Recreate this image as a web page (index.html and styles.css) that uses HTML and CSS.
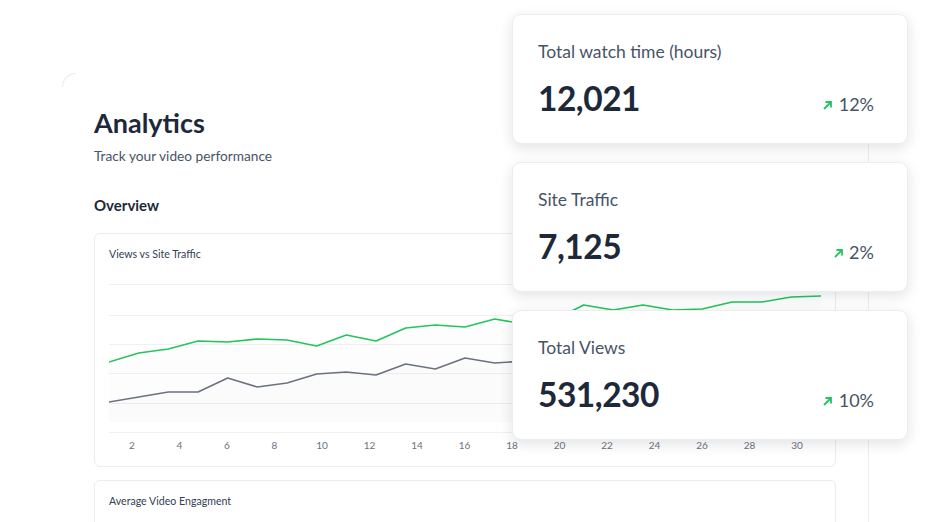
FILE: index.html
```html
<!DOCTYPE html>
<html lang="en">
  <head>
    <meta charset="UTF-8" />
    <meta name="viewport" content="width=device-width, initial-scale=1.0" />
    <title>Analytics</title>
    <link rel="stylesheet" href="styles.css">
  </head>
  <body>
    <div class="panel">
      <div class="panel-content">
        <h1>Analytics</h1>
        <p class="subtitle">Track your video performance</p>
        <h2 class="section-title">Overview</h2>

        <div class="chart-card">
          <h3 class="chart-title">Views vs Site Traffic</h3>
          <svg class="chart" width="712" height="180" viewBox="0 0 712 180">
            <!-- grid -->
            <g stroke="#f0f0f0" stroke-width="1">
              <line x1="0" y1="8.5" x2="712" y2="8.5" />
              <line x1="0" y1="39.5" x2="712" y2="39.5" />
              <line x1="0" y1="68.5" x2="712" y2="68.5" />
              <line x1="0" y1="97.5" x2="712" y2="97.5" />
              <line x1="0" y1="127.5" x2="712" y2="127.5" />
              <line x1="0" y1="156.5" x2="712" y2="156.5" />
            </g>
            <!-- area under the lines -->
            <polygon fill="#000" fill-opacity="0.009"
              points="0,86 29.7,77 59.3,73 89,65 118.7,66 148.3,63 178,64 207.7,70 237.3,59 267,65 296.7,52 326.3,49 356,51 385.7,43 415.3,48 445,44 474.7,29 504.3,34 534,29 563.7,34 593.3,33 623,26 652.7,26 682.3,21 712,20 712,146 0,146" />
            <polygon fill="#000" fill-opacity="0.007"
              points="0,126 29.7,121 59.3,116 89,116 118.7,102 148.3,111 178,107 207.7,98 237.3,96 267,99 296.7,88 326.3,93 356,82 385.7,87 415.3,85 445,81 474.7,77 504.3,79 534,74 563.7,75 593.3,70 623,71 652.7,67 682.3,65 712,63 712,146 0,146" />
            <!-- site traffic -->
            <polyline fill="none" stroke="#6b7280" stroke-width="1.6" stroke-linejoin="round"
              points="0,126 29.7,121 59.3,116 89,116 118.7,102 148.3,111 178,107 207.7,98 237.3,96 267,99 296.7,88 326.3,93 356,82 385.7,87 415.3,85 445,81 474.7,77 504.3,79 534,74 563.7,75 593.3,70 623,71 652.7,67 682.3,65 712,63" />
            <!-- views -->
            <polyline fill="none" stroke="#22c55e" stroke-width="1.6" stroke-linejoin="round"
              points="0,86 29.7,77 59.3,73 89,65 118.7,66 148.3,63 178,64 207.7,70 237.3,59 267,65 296.7,52 326.3,49 356,51 385.7,43 415.3,48 445,44 474.7,29 504.3,34 534,29 563.7,34 593.3,33 623,26 652.7,26 682.3,21 712,20" />
            <!-- x axis -->
            <g class="axis" text-anchor="middle">
              <text x="23" y="173">2</text>
              <text x="70.5" y="173">4</text>
              <text x="118" y="173">6</text>
              <text x="165.5" y="173">8</text>
              <text x="213" y="173">10</text>
              <text x="260.5" y="173">12</text>
              <text x="308" y="173">14</text>
              <text x="355.5" y="173">16</text>
              <text x="403" y="173">18</text>
              <text x="450.5" y="173">20</text>
              <text x="498" y="173">22</text>
              <text x="545.5" y="173">24</text>
              <text x="593" y="173">26</text>
              <text x="640.5" y="173">28</text>
              <text x="688" y="173">30</text>
            </g>
          </svg>
        </div>

        <div class="chart-card chart-card-tall">
          <h3 class="chart-title">Average Video Engagment</h3>
        </div>
      </div>
    </div>

    <div class="stats">
      <div class="stat-card">
        <div class="stat-label">Total watch time (hours)</div>
        <div class="stat-row">
          <span class="stat-value">12,021</span>
          <span class="stat-change">
            <svg class="up-arrow" width="9" height="9" viewBox="0 0 9 9"><path d="M1 8L8 1M2.5 1H8V6.5" fill="none" stroke="#22c55e" stroke-width="1.8" /></svg>
            12%
          </span>
        </div>
      </div>
      <div class="stat-card">
        <div class="stat-label">Site Traffic</div>
        <div class="stat-row">
          <span class="stat-value">7,125</span>
          <span class="stat-change">
            <svg class="up-arrow" width="9" height="9" viewBox="0 0 9 9"><path d="M1 8L8 1M2.5 1H8V6.5" fill="none" stroke="#22c55e" stroke-width="1.8" /></svg>
            2%
          </span>
        </div>
      </div>
      <div class="stat-card">
        <div class="stat-label">Total Views</div>
        <div class="stat-row">
          <span class="stat-value">531,230</span>
          <span class="stat-change">
            <svg class="up-arrow" width="9" height="9" viewBox="0 0 9 9"><path d="M1 8L8 1M2.5 1H8V6.5" fill="none" stroke="#22c55e" stroke-width="1.8" /></svg>
            10%
          </span>
        </div>
      </div>
    </div>
  </body>
</html>
```

FILE: styles.css
```css
html,
body {
  height: 522px;
  overflow: hidden;
}

body {
  margin: 0;
  background-color: #fff;
  font-family: Lato, "Open Sans", Arial, sans-serif;
  color: #1d2939;
}

.panel {
  margin: 73px 0 0 62px;
  width: 807px;
  box-sizing: border-box;
  border-right: 1px solid #eeeeee;
}

/* rounded corner of the panel frame */
.panel::before {
  content: "";
  display: block;
  width: 14px;
  height: 14px;
  box-sizing: border-box;
  border-top: 1px solid #ebebeb;
  border-left: 1px solid #ebebeb;
  border-top-left-radius: 14px;
}

.panel-content {
  padding: 20px 32px 0 32px;
}

h1 {
  margin: 0;
  font-size: 27px;
  line-height: 32px;
  font-weight: 700;
  color: #1d2939;
}

.subtitle {
  margin: 8px 0 0;
  font-size: 13.7px;
  line-height: 18px;
  color: #475467;
}

.section-title {
  margin: 30px 0 0;
  font-size: 15px;
  line-height: 20px;
  font-weight: 700;
  color: #1d2939;
}

.chart-card {
  margin-top: 18px;
  padding: 13px 14px 10px;
  border: 1px solid #ececec;
  border-radius: 6px;
  background-color: #fff;
}

.chart-card + .chart-card {
  margin-top: 13px;
}

.chart-card-tall {
  height: 60px;
}

.chart-title {
  margin: 0;
  font-size: 10.6px;
  line-height: 14px;
  font-weight: 400;
  color: #344054;
}

.chart {
  display: block;
  margin-top: 15px;
}

.axis text {
  font-family: Lato, Arial, sans-serif;
  font-size: 10px;
  fill: #6b7280;
}

/* summary cards floating over the chart */
.stats {
  position: absolute;
  top: 14px;
  left: 512px;
  width: 396px;
  display: flex;
  flex-direction: column;
  gap: 18px;
}

.stat-card {
  height: 130px;
  box-sizing: border-box;
  padding: 26px 33px 0 25px;
  background-color: #fff;
  border: 1px solid #ededed;
  border-radius: 9px;
  box-shadow: 0 4px 14px rgba(16, 24, 40, 0.12);
}

.stat-label {
  font-size: 17.5px;
  line-height: 22px;
  color: #475467;
}

.stat-row {
  margin-top: 15px;
  display: flex;
  justify-content: space-between;
  align-items: baseline;
}

.stat-value {
  font-size: 33.5px;
  line-height: 40px;
  font-weight: 700;
  letter-spacing: -0.5px;
  color: #1d2939;
}

.stat-change {
  font-size: 18px;
  line-height: 22px;
  color: #475467;
}

.up-arrow {
  margin-right: 2px;
  vertical-align: 1px;
}
```
